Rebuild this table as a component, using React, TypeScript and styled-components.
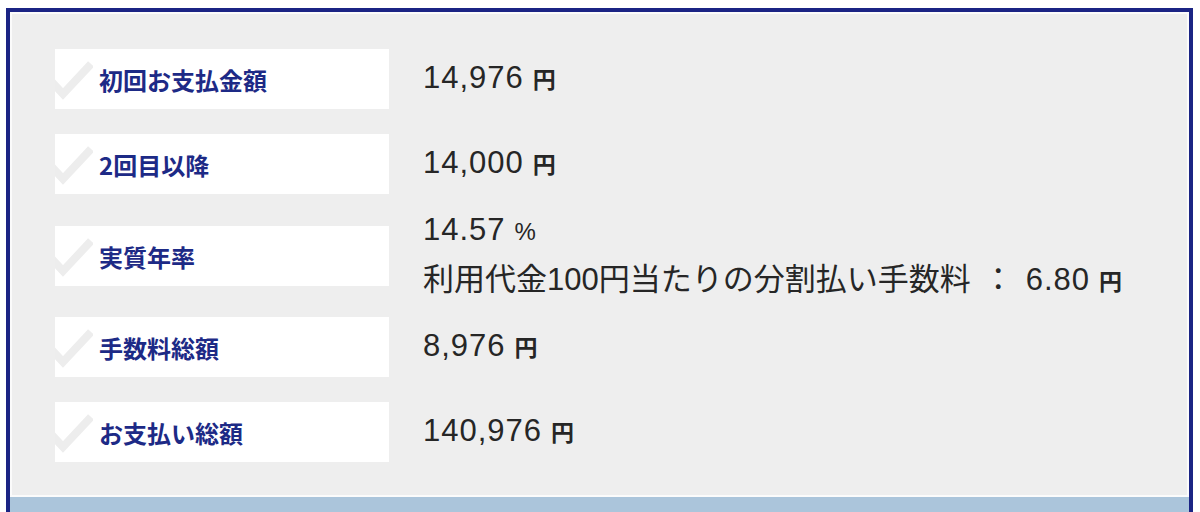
import React from "react";
import styled, { createGlobalStyle } from "styled-components";

const GlobalStyle = createGlobalStyle`
  html, body { margin: 0; padding: 0; background: #ffffff; }
  body { font-family: "Noto Sans CJK JP", "Noto Sans", sans-serif; overflow: hidden; }
`;

const Frame = styled.div`
  margin: 8px 7px 0 6px;
  border: 4px solid #1b2484;
  border-bottom: none;
  background: #ffffff;
`;

const Panel = styled.div`
  background: #eeeeee;
  border: 2px solid #fbfbfb;
  padding: 35px 40px 33px 43px;
  display: flex;
  flex-direction: column;
  gap: 25px;
`;

const Footer = styled.div`
  height: 40px;
  background: #abc5db;
`;

const Row = styled.div<{ $tall?: boolean }>`
  display: flex;
  align-items: center;
  gap: 34px;
  padding: ${(p) => (p.$tall ? "7px 0 6px" : "0")};
`;

const LabelBox = styled.div`
  width: 334px;
  height: 60px;
  flex: none;
  background: #ffffff;
  display: flex;
  align-items: center;
  overflow: hidden;
`;

const Check = styled.svg`
  flex: none;
  width: 44px;
  height: 44px;
  margin-left: -6px;
  margin-right: 6px;
`;

const LabelText = styled.span`
  font-size: 24px;
  font-weight: 700;
  color: #1d2a86;
  white-space: nowrap;
`;

const ValueCell = styled.div`
  height: 60px;
  display: flex;
  flex-direction: column;
  justify-content: center;
  color: #262626;
  font-family: "Liberation Sans", "Noto Sans CJK JP", sans-serif;
`;

const ValueLine = styled.div`
  font-size: 31px;
  line-height: 48px;
  white-space: nowrap;
  display: flex;
  align-items: baseline;
`;

const Num = styled.span`
  letter-spacing: 1px;
`;

const Unit = styled.span<{ $bold?: boolean }>`
  font-size: ${(p) => (p.$bold ? "23px" : "24px")};
  font-weight: ${(p) => (p.$bold ? 700 : 400)};
  margin-left: 9px;
`;

const Colon = styled.span`
  margin: 0 12px;
`;

const CheckIcon = () => (
  <Check viewBox="0 0 44 44" aria-hidden="true">
    <polyline
      points="1,23 14,37 42,7"
      fill="none"
      stroke="#ededed"
      strokeWidth="8"
      strokeLinejoin="miter"
    />
  </Check>
);

type Item = { label: string; lines: React.ReactNode[]; tall?: boolean };

const yen = <Unit $bold>円</Unit>;

const items: Item[] = [
  { label: "初回お支払金額", lines: [<><Num>14,976</Num>{yen}</>] },
  { label: "2回目以降", lines: [<><Num>14,000</Num>{yen}</>] },
  {
    label: "実質年率",
    tall: true,
    lines: [
      <><Num>14.57</Num><Unit>%</Unit></>,
      <>
        利用代金100円当たりの分割払い手数料<Colon>：</Colon><Num>6.80</Num>{yen}
      </>,
    ],
  },
  { label: "手数料総額", lines: [<><Num>8,976</Num>{yen}</>] },
  { label: "お支払い総額", lines: [<><Num>140,976</Num>{yen}</>] },
];

export default function App() {
  return (
    <>
      <GlobalStyle />
      <Frame>
        <Panel>
          {items.map((it) => (
            <Row key={it.label} $tall={it.tall}>
              <LabelBox>
                <CheckIcon />
                <LabelText>{it.label}</LabelText>
              </LabelBox>
              <ValueCell>
                {it.lines.map((l, i) => (
                  <ValueLine key={i}>{l}</ValueLine>
                ))}
              </ValueCell>
            </Row>
          ))}
        </Panel>
        <Footer />
      </Frame>
    </>
  );
}
